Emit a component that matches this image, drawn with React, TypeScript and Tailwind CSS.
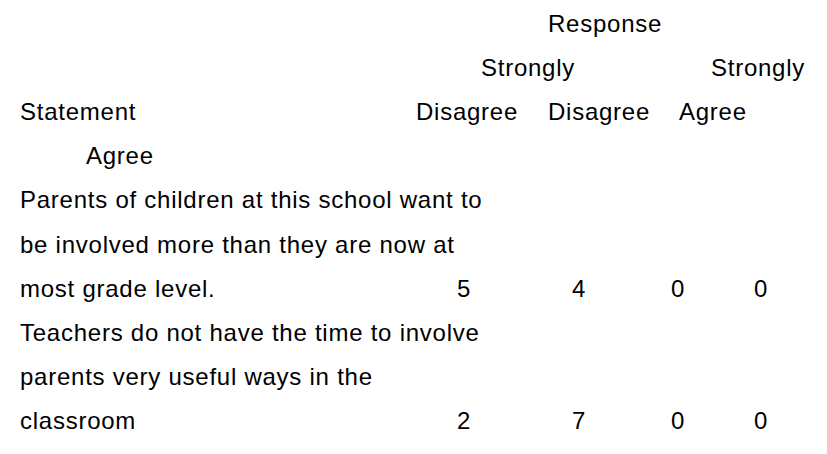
const cells = (nums: string[]) => (
  <>
    <span className="w-[40px] text-center">{nums[0]}</span>
    <span className="w-[75px]" />
    <span className="w-[40px] text-center">{nums[1]}</span>
    <span className="w-[59px]" />
    <span className="w-[40px] text-center">{nums[2]}</span>
    <span className="w-[43px]" />
    <span className="w-[40px] text-center">{nums[3]}</span>
  </>
);

const Row = ({ children, className = "" }: { children?: React.ReactNode; className?: string }) => (
  <div className={`flex h-[44.2px] items-center whitespace-nowrap ${className}`}>{children}</div>
);

const App = () => {
  return (
    <div
      className="w-[827px] h-[454px] pt-[1.5px] bg-white text-black text-[24px] tracking-[0.75px] overflow-hidden"
      style={{ fontFamily: '"Liberation Sans", Arial, sans-serif' }}
    >
      <Row className="pl-[548px]">Response</Row>
      <Row className="pl-[481px]">
        <span className="w-[230px]">Strongly</span>
        <span>Strongly</span>
      </Row>
      <Row className="pl-[20px]">
        <span className="w-[396px]">Statement</span>
        <span className="w-[132px]">Disagree</span>
        <span className="w-[131px]">Disagree</span>
        <span>Agree</span>
      </Row>
      <Row className="pl-[86px]">Agree</Row>
      <Row className="pl-[20px]">Parents of children at this school want to</Row>
      <Row className="pl-[20px]">be involved more than they are now at</Row>
      <Row className="pl-[20px]">
        <span className="w-[424px]">most grade level.</span>
        {cells(["5", "4", "0", "0"])}
      </Row>
      <Row className="pl-[20px]">Teachers do not have the time to involve</Row>
      <Row className="pl-[20px]">parents very useful ways in the</Row>
      <Row className="pl-[20px]">
        <span className="w-[424px]">classroom</span>
        {cells(["2", "7", "0", "0"])}
      </Row>
    </div>
  );
};

export default App;
